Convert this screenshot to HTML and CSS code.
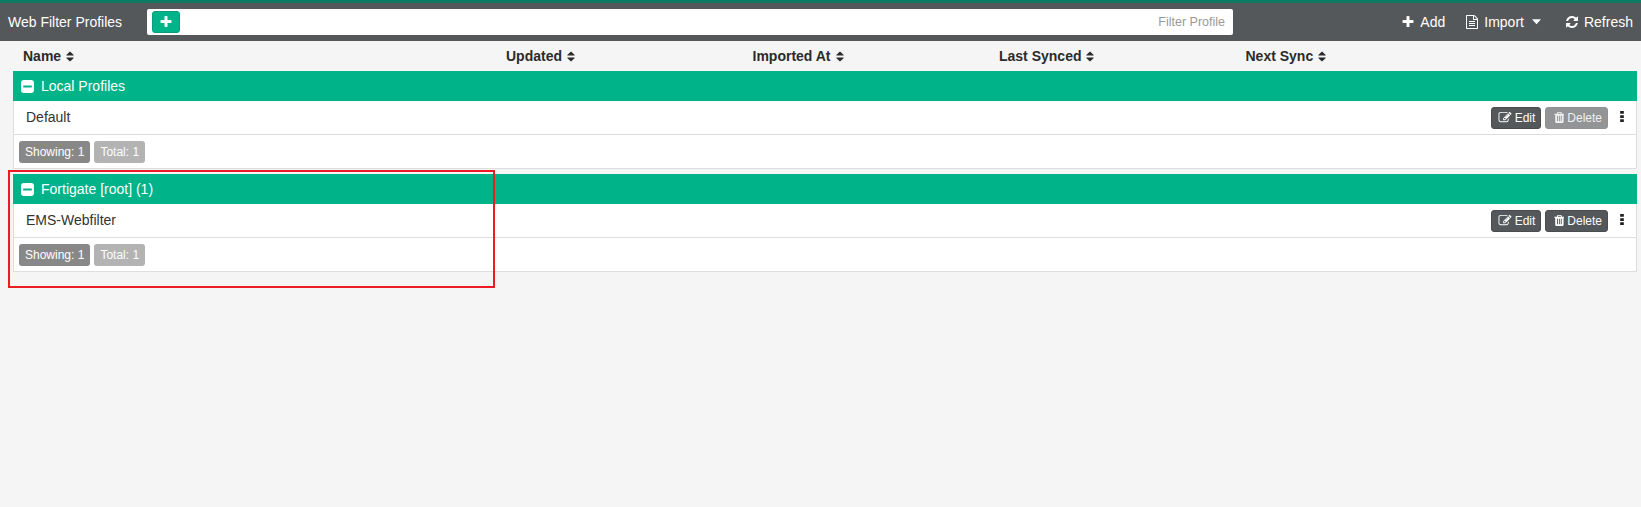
FILE: index.html
```html
<!DOCTYPE html>
<html lang="en">
<head>
<meta charset="utf-8">
<title>Web Filter Profiles</title>
<link rel="stylesheet" href="styles.css">
</head>
<body>
<svg class="sprite" xmlns="http://www.w3.org/2000/svg">
  <symbol id="i-plus" viewBox="0 0 1792 1792"><path d="M1600 736v192q0 40-28 68t-68 28h-416v416q0 40-28 68t-68 28h-192q-40 0-68-28t-28-68v-416h-416q-40 0-68-28t-28-68v-192q0-40 28-68t68-28h416v-416q0-40 28-68t68-28h192q40 0 68 28t28 68v416h416q40 0 68 28t28 68z"/></symbol>
  <symbol id="i-sort" viewBox="0 0 1408 1792"><path d="M1216 1088q0 26-19 45l-448 448q-19 19-45 19t-45-19l-448-448q-19-19-19-45t19-45 45-19h896q26 0 45 19t19 45zm0-384q0 26-19 45t-45 19h-896q-26 0-45-19t-19-45 19-45l448-448q19-19 45-19t45 19l448 448q19 19 19 45z"/></symbol>
  <symbol id="i-minus" viewBox="0 0 1792 1792"><path d="M1408 960v-128q0-26-19-45t-45-19h-896q-26 0-45 19t-19 45v128q0 26 19 45t45 19h896q26 0 45-19t19-45zm256-544v960q0 119-84.500 203.500t-203.500 84.500h-960q-119 0-203.500-84.500t-84.500-203.500v-960q0-119 84.500-203.500t203.500-84.500h960q119 0 203.500 84.500t84.500 203.500z"/></symbol>
  <symbol id="i-edit" viewBox="0 0 1792 1792"><path d="M888 1184l116-116-152-152-116 116v56h96v96h56zm440-720q-16-16-33 1l-350 350q-17 17-1 33t33-1l350-350q17-17 1-33zm80 594v190q0 119-84.500 203.500t-203.500 84.500h-832q-119 0-203.500-84.500t-84.500-203.500v-832q0-119 84.500-203.500t203.500-84.500h832q63 0 117 25 15 7 18 23 3 17-9 29l-49 49q-14 14-32 8-23-6-45-6h-832q-66 0-113 47t-47 113v832q0 66 47 113t113 47h832q66 0 113-47t47-113v-126q0-13 9-22l64-64q15-15 35-7t20 29zm-96-738l288 288-672 672h-288v-288zm444 132l-92 92-288-288 92-92q28-28 68-28t68 28l152 152q28 28 28 68t-28 68z"/></symbol>
  <symbol id="i-trash" viewBox="0 0 1408 1792"><path d="M704 1376v-704q0-14-9-23t-23-9h-64q-14 0-23 9t-9 23v704q0 14 9 23t23 9h64q14 0 23-9t9-23zm256 0v-704q0-14-9-23t-23-9h-64q-14 0-23 9t-9 23v704q0 14 9 23t23 9h64q14 0 23-9t9-23zm256 0v-704q0-14-9-23t-23-9h-64q-14 0-23 9t-9 23v704q0 14 9 23t23 9h64q14 0 23-9t9-23zm-544-992h448l-48-117q-7-9-17-11h-317q-10 2-17 11zm928 32v64q0 14-9 23t-23 9h-96v948q0 83-47 143.500t-113 60.500h-832q-66 0-113-58.500t-47-141.500v-952h-96q-14 0-23-9t-9-23v-64q0-14 9-23t23-9h309l70-167q15-37 54-63t79-26h320q40 0 79 26t54 63l70 167h309q14 0 23 9t9 23z"/></symbol>
  <symbol id="i-file" viewBox="0 0 1792 1792"><path d="M1596 380q28 28 48 76t20 88v1152q0 40-28 68t-68 28h-1344q-40 0-68-28t-28-68v-1600q0-40 28-68t68-28h896q40 0 88 20t76 48zm-444-244v376h376q-10-29-22-41l-313-313q-12-12-41-22zm384 1528v-1024h-416q-40 0-68-28t-28-68v-416h-768v1536h1280zm-1024-864q0-14 9-23t23-9h704q14 0 23 9t9 23v64q0 14-9 23t-23 9h-704q-14 0-23-9t-9-23v-64zm736 224q14 0 23 9t9 23v64q0 14-9 23t-23 9h-704q-14 0-23-9t-9-23v-64q0-14 9-23t23-9h704zm0 256q14 0 23 9t9 23v64q0 14-9 23t-23 9h-704q-14 0-23-9t-9-23v-64q0-14 9-23t23-9h704z"/></symbol>
  <symbol id="i-refresh" viewBox="0 0 1536 1792"><path d="M1511 1056q0 5-1 7-64 268-268 434.500t-478 166.500q-146 0-282.500-55t-243.500-157l-129 129q-19 19-45 19t-45-19-19-45v-448q0-26 19-45t45-19h448q26 0 45 19t19 45-19 45l-137 137q71 66 161 102t187 36q134 0 250-65t186-179q11-17 53-117 8-23 30-23h192q13 0 22.500 9.500t9.500 22.500zm25-800v448q0 26-19 45t-45 19h-448q-26 0-45-19t-19-45 19-45l138-138q-148-137-349-137-134 0-250 65t-186 179q-11 17-53 117-8 23-30 23h-199q-13 0-22.500-9.500t-9.500-22.500v-7q65-268 270-434.500t480-166.500q146 0 284 55.500t245 156.500l130-129q19-19 45-19t45 19 19 45z"/></symbol>
  <symbol id="i-caret" viewBox="0 0 10 6"><path d="M0 0h10L5 5.500z"/></symbol>
  <symbol id="i-dots" viewBox="0 0 4 12"><path d="M0 0h4v3H0zM0 4.500h4v3H0zM0 9h4v3H0z"/></symbol>
</svg>

<header class="toolbar">
  <div class="toolbar-title">Web Filter Profiles</div>
  <div class="filter">
    <button class="filter-add" type="button"><svg class="icon icon-14"><use href="#i-plus"/></svg></button>
    <input class="filter-input" type="text" placeholder="Filter Profile">
  </div>
  <nav class="actions">
    <a class="action action-add"><svg class="icon icon-14"><use href="#i-plus"/></svg>Add</a>
    <a class="action action-import"><svg class="icon icon-14"><use href="#i-file"/></svg>Import<svg class="caret"><use href="#i-caret"/></svg></a>
    <a class="action action-refresh"><svg class="icon icon-14"><use href="#i-refresh"/></svg>Refresh</a>
  </nav>
</header>

<main class="content">
  <div class="columns">
    <div class="col">Name <svg class="sort"><use href="#i-sort"/></svg></div>
    <div class="col">Updated <svg class="sort"><use href="#i-sort"/></svg></div>
    <div class="col">Imported At <svg class="sort"><use href="#i-sort"/></svg></div>
    <div class="col">Last Synced <svg class="sort"><use href="#i-sort"/></svg></div>
    <div class="col">Next Sync <svg class="sort"><use href="#i-sort"/></svg></div>
  </div>

  <section class="group">
    <h2 class="group-head"><svg class="icon icon-16"><use href="#i-minus"/></svg>Local Profiles</h2>
    <div class="row">
      <span class="row-name">Default</span>
      <div class="row-actions">
        <button class="btn" type="button"><svg class="icon icon-edit"><use href="#i-edit"/></svg>Edit</button>
        <button class="btn btn-disabled" type="button"><svg class="icon icon-trash"><use href="#i-trash"/></svg>Delete</button>
        <svg class="dots"><use href="#i-dots"/></svg>
      </div>
    </div>
    <div class="group-foot">
      <span class="badge badge-showing">Showing: 1</span>
      <span class="badge badge-total">Total: 1</span>
    </div>
  </section>

  <section class="group group-second">
    <h2 class="group-head"><svg class="icon icon-16"><use href="#i-minus"/></svg>Fortigate [root] (1)</h2>
    <div class="row">
      <span class="row-name">EMS-Webfilter</span>
      <div class="row-actions">
        <button class="btn" type="button"><svg class="icon icon-edit"><use href="#i-edit"/></svg>Edit</button>
        <button class="btn" type="button"><svg class="icon icon-trash"><use href="#i-trash"/></svg>Delete</button>
        <svg class="dots"><use href="#i-dots"/></svg>
      </div>
    </div>
    <div class="group-foot">
      <span class="badge badge-showing">Showing: 1</span>
      <span class="badge badge-total">Total: 1</span>
    </div>
  </section>
</main>

<div class="annotation"></div>
</body>
</html>
```
FILE: styles.css
```css
* { box-sizing: border-box; }

html, body { height: 100%; }

body {
  margin: 0;
  background: #f5f5f5;
  color: #333;
  font-family: "Liberation Sans", Arial, sans-serif;
  font-size: 14px;
  overflow: hidden;
}

.sprite { display: none; }

.icon { fill: currentColor; flex: none; }
.icon-edit { width: 14px; height: 13px; }
.icon-trash { width: 12px; height: 13px; }
.icon-14 { width: 14px; height: 14px; }
.icon-16 { width: 15px; height: 15px; }

.toolbar {
  display: flex;
  align-items: center;
  height: 41px;
  padding: 0 8px;
  border-top: 3px solid #0f7a62;
  background: #55585a;
  color: #fff;
}

.toolbar-title { width: 139px; flex: none; }

.filter {
  display: flex;
  align-items: center;
  width: 1086px;
  height: 26px;
  padding: 0 8px 0 5px;
  border-radius: 2px;
  background: #fff;
}

.filter-add {
  display: flex;
  align-items: center;
  justify-content: center;
  width: 28px;
  height: 22px;
  padding: 0;
  border: 1px solid #0a9e7d;
  border-radius: 3px;
  background: #00b389;
  color: #fff;
}

.filter-input {
  flex: 1;
  min-width: 0;
  border: 0;
  outline: 0;
  padding: 0;
  background: transparent;
  font: 12.500px "Liberation Sans", Arial, sans-serif;
  text-align: right;
}

.filter-input::placeholder { color: #999; opacity: 1; }

.actions { display: flex; align-items: center; margin-left: auto; }

.action {
  display: flex;
  align-items: center;
  gap: 5px;
}

.action-import { margin-left: 20px; }
.action-refresh { margin-left: 24px; }

.caret { width: 9px; height: 6px; margin-left: 3px; fill: currentColor; }

.content { padding: 0 4px 0 13px; }

.columns {
  display: grid;
  grid-template-columns: 483px repeat(4, 246.5px);
  align-items: center;
  height: 30px;
  padding-left: 10px;
  color: #2b2b2b;
  font-weight: bold;
  font-size: 14px;
}

.col { display: flex; align-items: center; gap: 4px; }

.sort { width: 10px; height: 13px; fill: currentColor; }

.group-second { margin-top: 5px; }

.group-head {
  display: flex;
  align-items: center;
  gap: 6px;
  height: 30px;
  margin: 0;
  padding-left: 7px;
  background: #00b389;
  color: #fff;
  font-size: 14px;
  font-weight: normal;
}

.row {
  display: flex;
  align-items: center;
  justify-content: space-between;
  height: 34px;
  padding: 0 10px 0 12px;
  border: 1px solid #dedede;
  border-top: 0;
  background: #fff;
}

.row-name { margin-top: -2px; }

.row-actions { display: flex; align-items: center; gap: 4px; }

.btn {
  display: flex;
  align-items: center;
  gap: 3px;
  height: 22px;
  padding: 0 5px 0 6px;
  border: 1px solid #4a4d4f;
  border-radius: 3px;
  background: #55585a;
  color: #fff;
  font: 12px "Liberation Sans", Arial, sans-serif;
}

.btn-disabled { border-color: #8f9193; background: #929496; color: #f0f0f0; }

.dots { width: 4px; height: 11px; margin: -3px 2px 0 8px; fill: #222; }

.group-foot {
  display: flex;
  align-items: center;
  gap: 4px;
  height: 34px;
  padding-left: 5px;
  border: 1px solid #dedede;
  border-top: 0;
  background: #fff;
}

.badge {
  display: flex;
  align-items: center;
  height: 22px;
  padding: 0 6px;
  border-radius: 3px;
  color: #fff;
  font-size: 12px;
}

.badge-showing { background: #888; }
.badge-total { background: #b3b3b3; }

.annotation {
  position: absolute;
  left: 8px;
  top: 170px;
  width: 487px;
  height: 118px;
  border: 2px solid #ed1c24;
  pointer-events: none;
}
```
